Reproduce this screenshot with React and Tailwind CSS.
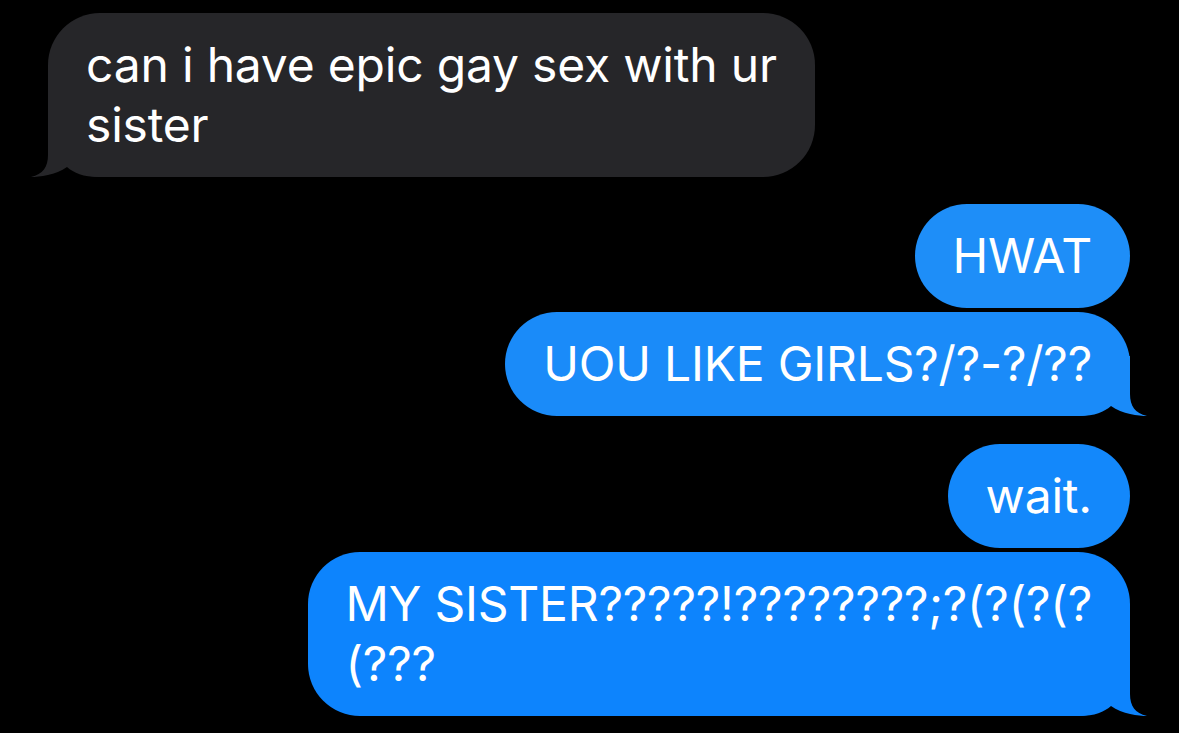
import React from 'react';

const font = { fontFamily: 'Inter, "Liberation Sans", sans-serif' };

function Tail({ color, left }) {
  // drawn around the bubble's bottom corner, behind the text
  return (
    <svg
      width="80"
      height="60"
      viewBox="0 0 80 60"
      className={left ? 'absolute bottom-0 left-[-17px] -scale-x-100' : 'absolute bottom-0 right-[-17px]'}
    >
      <path
        d="M0 0 L63 0 L63 38 C63 50 68 57 80 60 C72 60 55 58 44 50 C37 56 28 60 12 60 L0 60 Z"
        fill={color}
      />
    </svg>
  );
}

function Bubble({ children, color, side, tail, className }) {
  const mine = side === 'right';
  return (
    <div
      className={`relative w-fit rounded-[52px] px-[38px] py-[22px] text-[48px] leading-[60px] tracking-[-0.2px] text-white ${mine ? 'self-end' : 'self-start'} ${className || ''}`}
      style={{ backgroundColor: color, ...font }}
    >
      {tail && <Tail color={color} left={!mine} />}
      <span className="relative block whitespace-nowrap">{children}</span>
    </div>
  );
}

export default function App() {
  return (
    <div className="flex h-[733px] w-full flex-col overflow-hidden bg-black pl-[48px] pr-[49px] pt-[13px]">
      <Bubble color="#262629" side="left" tail>
        can i have epic gay sex with ur
        <br />
        sister
      </Bubble>

      <Bubble color="#1e8ef8" side="right" className="mt-[27px]">
        HWAT
      </Bubble>
      <Bubble color="#1a8bf9" side="right" tail className="mt-[4px]">
        UOU LIKE GIRLS?/?-?/??
      </Bubble>

      <Bubble color="#1388fb" side="right" className="mt-[28px]">
        wait.
      </Bubble>
      <Bubble color="#0d84fd" side="right" tail className="mt-[4px]">
        MY SISTER?????!????????;?(?(?(?
        <br />
        (???
      </Bubble>
    </div>
  );
}
